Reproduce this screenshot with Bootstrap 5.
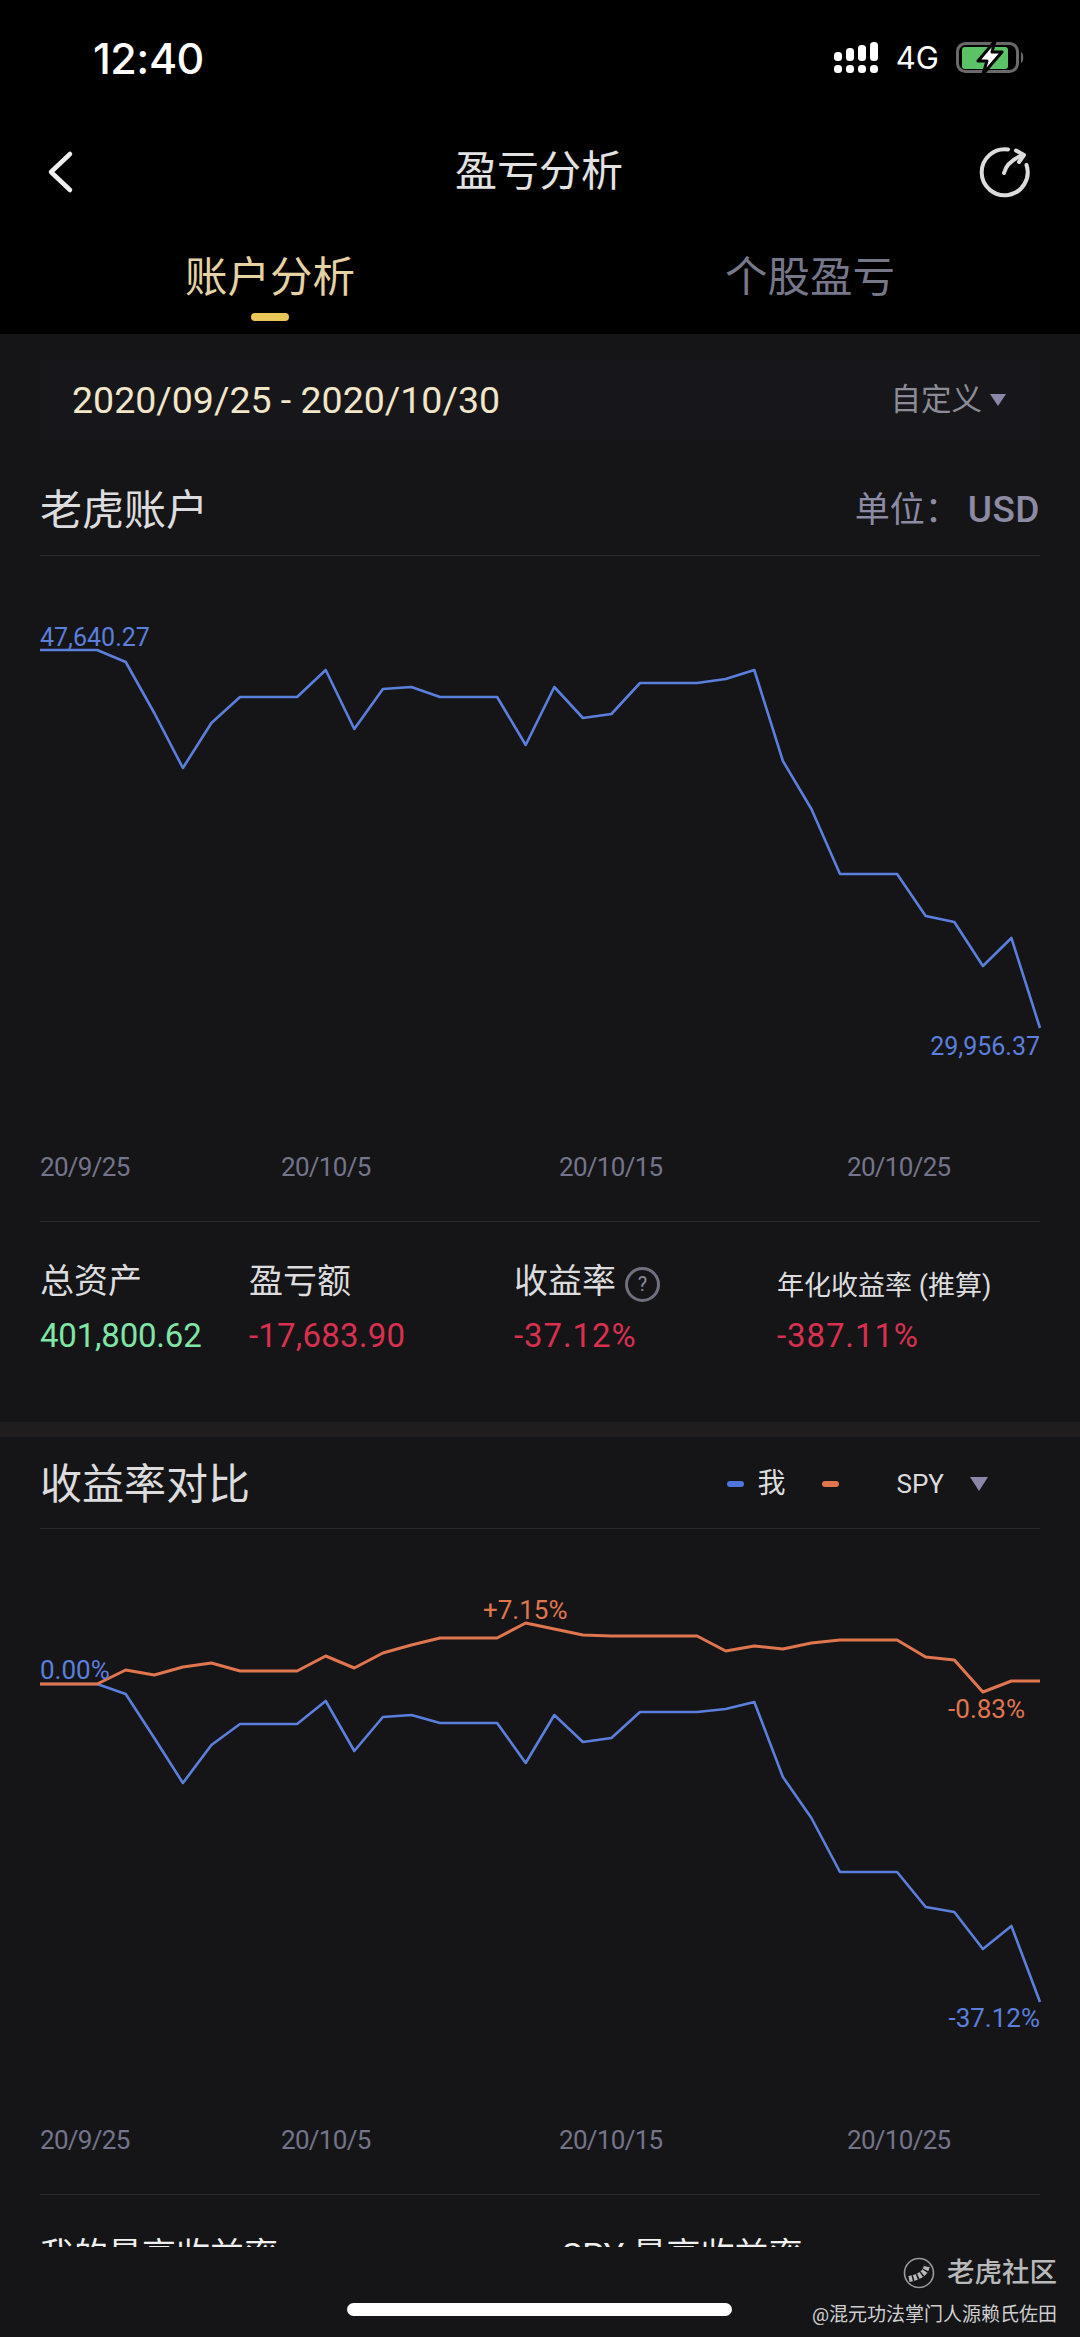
<!DOCTYPE html>
<html lang="zh-CN">
<head>
    <meta charset="UTF-8">
    <meta name="viewport" content="width=device-width, initial-scale=1.0">
    <title>盈亏分析</title>
    <link href="https://cdn.jsdelivr.net/npm/bootstrap@5.3.0/dist/css/bootstrap.min.css" rel="stylesheet">
    <style>
        body { background: #151517; font-family: Roboto, "Noto Sans CJK SC", sans-serif; }
        .phone { width: 1080px; height: 2337px; overflow: hidden; background: #151517; color: #dedee0; }

        .app-top { height: 334px; background: #000; }
        .status-row { height: 116px; padding: 0 54px 0 93px; font-family: Inter, sans-serif; color: #fff; }
        .clock { font-size: 43px; font-weight: 500; letter-spacing: -.5px; }
        .net-type { font-size: 31px; margin: 0 15px 0 16px; }
        .nav-row { height: 112px; padding: 0 48px 0 46px; }
        .nav-slot { width: 64px; }
        .back-icon { margin-left: -2px; }
        .page-title { font-size: 42px; color: #e2e2e2; line-height: 1; }
        .tab-item { padding-top: 25px; font-size: 42.5px; line-height: 50px; color: #77778a; }
        .tab-item.is-on { color: #e5d2a2; }
        .tab-bar { width: 38px; height: 8px; margin: 10px auto 0; border-radius: 4px; background: #e9c658; }

        .date-box { height: 80px; margin: 26px 40px 0; padding: 0 34px 0 32px; background: #17171b; }
        .date-text { font-size: 37.5px; color: #f1e6c8; }
        .range-pick { font-size: 30.5px; color: #8c8c96; }
        .tri { display: inline-block; width: 0; height: 0; border-style: solid; border-color: #8a87a8 transparent transparent; }
        .tri-sm { border-width: 12px 8px 0; margin-left: 8px; }
        .tri-md { border-width: 14px 9px 0; margin-left: 26px; }

        .sec-head { margin: 0 40px; border-bottom: 1px solid #2a2a2d; }
        .sec-head-a { height: 116px; padding-top: 25px; }
        .sec-head-b { height: 92px; padding-top: 3px; }
        .sec-title { font-size: 42px; color: #dcdcde; }
        .unit-text { font-size: 35px; color: #8d8ba3; }
        .unit-code { font-size: 37px; font-weight: 500; letter-spacing: .5px; margin-left: 8px; }

        .chart-wrap { margin: 0 40px; padding-bottom: 34px; border-bottom: 1px solid #2a2a2d; }
        .chart-canvas { height: 591px; }
        .chart-canvas svg { display: block; overflow: visible; }
        .pt-label { position: absolute; font-size: 25px; line-height: 30px; white-space: nowrap; }
        .pt-pct { font-size: 26px; }
        .c-blue { color: #5b7fdc; }
        .c-orange { color: #e0764e; }
        .axis-row { display: grid; grid-template-columns: 241px 278px 288px auto; height: 40px; line-height: 40px; font-size: 26px; letter-spacing: -.7px; color: #74748a; }

        .stats-row { display: grid; grid-template-columns: 209px 265px 263px auto; height: 200px; padding: 36px 0 0 40px; }
        .stat-label { height: 46px; line-height: 46px; font-size: 34px; color: #dcdcde; white-space: nowrap; }
        .stat-label-sm { font-size: 27px; padding-top: 5px; }
        .stat-value { margin-top: 10px; line-height: 44px; font-size: 33px; letter-spacing: .2px; }
        .stat-pct { letter-spacing: .9px; }
        .v-up { color: #7fe6a6; letter-spacing: -.2px; }
        .v-down { color: #d9304f; }
        .help-dot { display: inline-block; width: 35px; height: 35px; margin-left: 9px; border: 3px solid #6f6f80; border-radius: 50%; font-size: 20px; line-height: 29px; text-align: center; color: #8a8a98; vertical-align: 2px; }

        .sec-band { height: 15px; background: #1f1d1e; }
        .legend-row { margin-right: 52px; color: #dcdcde; }
        .dash { width: 17px; height: 6px; border-radius: 3px; }
        .dash-blue { background: #4f76dc; }
        .dash-orange { background: #e0764e; margin-left: 36px; }
        .legend-me { font-size: 28px; margin-left: 14px; }
        .legend-spy { font-size: 26px; margin-left: 58px; }

        .cut-row { display: grid; grid-template-columns: 522px auto; height: 52px; padding: 37px 0 0 40px; overflow: hidden; font-size: 34px; line-height: 46px; color: #f0f0f0; }

        .watermark { position: absolute; top: 2255px; right: 23px; color: #b9b9bb; }
        .wm-name { font-size: 27.5px; font-weight: 500; line-height: 36px; }
        .wm-user { font-size: 19px; line-height: 30px; margin-top: 9px; color: #cfcfd1; }
        .home-bar { position: absolute; top: 2303px; left: 347px; width: 385px; height: 13px; border-radius: 7px; background: #fff; }
    </style>
</head>
<body class="m-0">
    <div class="phone position-relative">
        <header class="app-top">
            <div class="status-row d-flex justify-content-between align-items-center">
                <span class="clock">12:40</span>
                <div class="d-flex align-items-center">
                    <svg width="48" height="34" viewBox="0 0 48 34" fill="#fff">
                        <rect x="2" y="11" width="8" height="9" rx="3.5"/><rect x="14" y="7" width="8" height="13" rx="3.5"/>
                        <rect x="26" y="4" width="8" height="16" rx="3.5"/><rect x="38" y="1" width="8" height="19" rx="3.5"/>
                        <rect x="2" y="24" width="8" height="8" rx="3.5"/><rect x="14" y="24" width="8" height="8" rx="3.5"/>
                        <rect x="26" y="24" width="8" height="8" rx="3.5"/><rect x="38" y="24" width="8" height="8" rx="3.5"/>
                    </svg>
                    <span class="net-type">4G</span>
                    <svg width="72" height="36" viewBox="0 0 72 36">
                        <rect x="3.5" y="3.5" width="60" height="28" rx="8" fill="none" stroke="#6a6a6a" stroke-width="3"/>
                        <rect x="8" y="7" width="46" height="22" rx="3" fill="#5bc266"/>
                        <path d="M67 12c3 1 3 10 0 11z" fill="#6a6a6a"/>
                        <path d="M41 1 24 21h9l-4 13 19-22H38z" fill="#fff" stroke="#000" stroke-width="3" stroke-linejoin="round"/>
                    </svg>
                </div>
            </div>
            <div class="nav-row d-flex justify-content-between align-items-center">
                <div class="nav-slot">
                    <svg class="d-block back-icon" width="32" height="44" viewBox="0 0 32 44" fill="none" stroke="#f0f0f0" stroke-width="4.5" stroke-linecap="round" stroke-linejoin="round"><path d="M26 4 7 22l19 18"/></svg>
                </div>
                <div class="page-title">盈亏分析</div>
                <div class="nav-slot d-flex justify-content-end">
                    <svg class="d-block me-n1" width="56" height="56" viewBox="0 0 56 56" fill="none" stroke="#dcdcdc" stroke-width="4" stroke-linecap="round" stroke-linejoin="round">
                        <path d="M32 5.500A23 23 0 1 0 50.500 21"/>
                        <path d="M28 29Q31 17 47 11"/>
                        <path d="M40 6.500l8 4.500-5 7"/>
                    </svg>
                </div>
            </div>
            <div class="row g-0">
                <div class="col-6 text-center tab-item is-on">账户分析<div class="tab-bar"></div></div>
                <div class="col-6 text-center tab-item">个股盈亏</div>
            </div>
        </header>

        <div class="date-box d-flex justify-content-between align-items-center">
            <span class="date-text">2020/09/25 - 2020/10/30</span>
            <span class="range-pick d-flex align-items-center">自定义<span class="tri tri-sm"></span></span>
        </div>

        <div class="sec-head sec-head-a d-flex justify-content-between align-items-center">
            <span class="sec-title">老虎账户</span>
            <span class="unit-text">单位：<span class="unit-code">USD</span></span>
        </div>
        <div class="chart-wrap">
            <div class="chart-canvas position-relative">
                <svg width="1000" height="591"><polyline id="lineAsset" fill="none" stroke="#5b7fdc" stroke-width="2.6" stroke-linejoin="round"/></svg>
                <span class="pt-label c-blue" style="left:0;top:67px">47,640.27</span>
                <span class="pt-label c-blue" style="right:0;top:476px">29,956.37</span>
            </div>
            <div class="axis-row"><span>20/9/25</span><span>20/10/5</span><span>20/10/15</span><span>20/10/25</span></div>
        </div>

        <div class="stats-row">
            <div><div class="stat-label">总资产</div><div class="stat-value v-up">401,800.62</div></div>
            <div><div class="stat-label">盈亏额</div><div class="stat-value v-down">-17,683.90</div></div>
            <div><div class="stat-label">收益率<span class="help-dot">?</span></div><div class="stat-value v-down stat-pct">-37.12%</div></div>
            <div><div class="stat-label stat-label-sm">年化收益率 (推算)</div><div class="stat-value v-down stat-pct">-387.11%</div></div>
        </div>
        <div class="sec-band"></div>

        <div class="sec-head sec-head-b d-flex justify-content-between align-items-center">
            <span class="sec-title">收益率对比</span>
            <div class="legend-row d-flex align-items-center">
                <span class="dash dash-blue"></span><span class="legend-me">我</span>
                <span class="dash dash-orange"></span><span class="legend-spy">SPY</span>
                <span class="tri tri-md"></span>
            </div>
        </div>
        <div class="chart-wrap">
            <div class="chart-canvas position-relative">
                <svg width="1000" height="591">
                    <polyline id="lineMine" fill="none" stroke="#5b7fdc" stroke-width="2.6" stroke-linejoin="round"/>
                    <polyline id="lineSpy" fill="none" stroke="#e0764e" stroke-width="3" stroke-linejoin="round"/>
                </svg>
                <span class="pt-label pt-pct c-blue" style="left:0;top:126px">0.00%</span>
                <span class="pt-label pt-pct c-orange" style="left:443px;top:66px">+7.15%</span>
                <span class="pt-label pt-pct c-orange" style="right:15px;top:165px">-0.83%</span>
                <span class="pt-label pt-pct c-blue" style="right:0;top:474px">-37.12%</span>
            </div>
            <div class="axis-row"><span>20/9/25</span><span>20/10/5</span><span>20/10/15</span><span>20/10/25</span></div>
        </div>
        <div class="cut-row"><span>我的最高收益率</span><span>SPY 最高收益率</span></div>

        <div class="watermark d-flex flex-column align-items-end">
            <div class="d-flex align-items-center gap-2">
                <svg class="me-1" width="32" height="32" viewBox="0 0 32 32" fill="none">
                    <circle cx="16" cy="16" r="14.5" stroke="#9a9a9c" stroke-width="1.6"/>
                    <path d="M24 8Q23 19 6 22" stroke="#b9b9bb" stroke-width="6"/>
                    <path d="M24 8Q23 19 6 22" stroke="#151517" stroke-width="6" stroke-dasharray="1.5 3.5"/>
                </svg>
                <span class="wm-name">老虎社区</span>
            </div>
            <div class="wm-user">@混元功法掌门人源赖氏佐田</div>
        </div>
        <div class="home-bar"></div>
    </div>

    <script src="https://cdn.jsdelivr.net/npm/bootstrap@5.3.0/dist/js/bootstrap.bundle.min.js"></script>
    <script>
        // y values read off the reference, per trading day
        const asset = [90,90,90,102,153,208,163,137,137,137,110,169,129,127,137,137,137,185,127,158,154,123,123,123,119,110,201,249,314,314,314,356,362,406,378,468];
        const mine = [124,124,124,134,178,223,185,164,164,164,141,191,157,155,163,163,163,203,155,182,178,152,152,152,149,142,217,258,312,312,312,347,352,389,366,442];
        const spy = [124,124,124,110,115,107,103,111,111,111,96,108,93,85,78,78,78,63,69,75,76,76,76,76,91,86,89,83,80,80,80,97,100,132,121,121];

        function drawLine(id, values, offset) {
            const points = values.map((y, i) => `${(i * 1000 / 35).toFixed(1)},${y + offset}`);
            document.getElementById(id).setAttribute('points', points.join(' '));
        }

        drawLine('lineAsset', asset, 4);
        drawLine('lineMine', mine, 31);
        drawLine('lineSpy', spy, 31);
    </script>
</body>
</html>
